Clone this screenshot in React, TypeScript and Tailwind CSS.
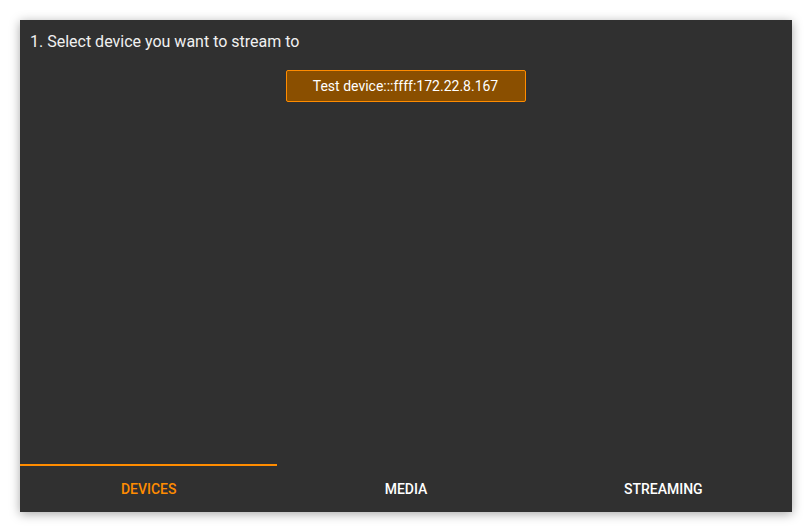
import React from "react";

export default function App() {
  return (
    <div className="w-[812px] h-[532px] bg-white p-5" style={{ fontFamily: "Roboto, 'Noto Sans', sans-serif" }}>
      <div className="w-[772px] h-[492px] bg-[#303030] flex flex-col shadow-[0_2px_10px_rgba(0,0,0,0.35)]">
        <div className="flex-1 flex flex-col">
          <div className="pl-[10px] pt-[12px] text-[16px] leading-[19px] text-[#f0f0f0]">
            1. Select device you want to stream to
          </div>
          <div className="flex justify-center mt-[19px]">
            <button className="w-[240px] h-[32px] bg-[#8a4f00] border border-[#ff8c00] rounded-[2px] text-white text-[14px] ml-[-1px]">
              Test device:::ffff:172.22.8.167
            </button>
          </div>
        </div>
        <div className="h-[48px] flex">
          <div className="flex-1 border-t-2 border-[#ff8c00] flex items-center justify-center text-[14px] font-medium text-[#ff8c00]">
            DEVICES
          </div>
          <div className="flex-1 border-t-2 border-transparent flex items-center justify-center text-[14px] font-medium text-white">
            MEDIA
          </div>
          <div className="flex-1 border-t-2 border-transparent flex items-center justify-center text-[14px] font-medium text-white">
            STREAMING
          </div>
        </div>
      </div>
    </div>
  );
}
